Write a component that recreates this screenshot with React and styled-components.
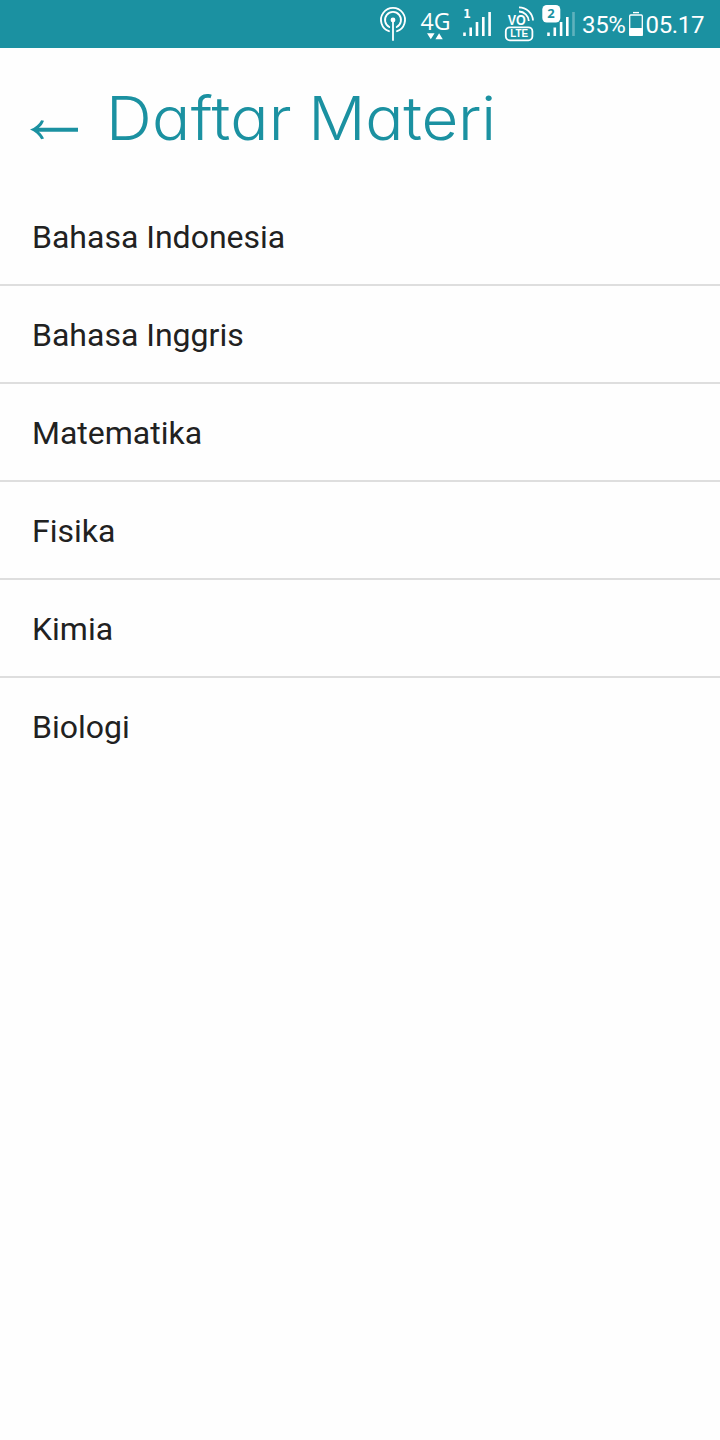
import React from "react";
import styled, { createGlobalStyle } from "styled-components";

const Global = createGlobalStyle`
  *, *::before, *::after { box-sizing: border-box; }
  body { margin: 0; background: #fefefe; }
`;

const Screen = styled.div`
  display: flex;
  flex-direction: column;
  width: 720px;
  min-height: 1440px;
  background: #fefefe;
  font-family: Roboto, sans-serif;
`;

const StatusBar = styled.header`
  display: flex;
  justify-content: flex-end;
  height: 48px;
  padding-right: 15px;
  background: #1b91a1;
  color: #fff;
`;

const StatusIcons = styled.svg`
  width: 204px;
  height: 48px;
  flex: none;
`;

const StatusText = styled.span`
  width: ${(p) => p.$width}px;
  padding-left: ${(p) => p.$inset || 0}px;
  font-size: 24px;
  line-height: 50px;
  letter-spacing: -0.35px;
  white-space: nowrap;
`;

const BatteryIcon = styled.svg`
  width: 18px;
  height: 48px;
  flex: none;
`;

const TitleBar = styled.div`
  display: flex;
  height: 140px;
  padding-left: 30px;
`;

const BackButton = styled.button`
  width: 75.5px;
  height: 140px;
  padding: 0;
  border: 0;
  background: none;
  text-align: left;
`;

const BackArrow = styled.svg`
  display: block;
  width: 50px;
  height: 140px;
`;

const Title = styled.h1`
  margin: 0;
  color: #1b91a1;
  font-family: Inter, sans-serif;
  font-feature-settings: "cv11", "calt" 0;
  font-size: 60px;
  font-weight: 330;
  line-height: 141px;
  word-spacing: -1.5px;
  white-space: nowrap;
  transform: scaleX(1.06);
  transform-origin: left center;
`;

const Word = styled.span`
  letter-spacing: ${(p) => p.$tracking}px;
`;

const List = styled.ul`
  margin: 0;
  padding: 0;
  list-style: none;
`;

const Item = styled.li`
  height: 98px;
  padding-left: 32px;
  border-bottom: 2px solid #dedede;
  color: #212121;
  font-size: 32px;
  line-height: 98px;

  &:last-child { border-bottom-color: transparent; }
`;

const subjects = [
  "Bahasa Indonesia",
  "Bahasa Inggris",
  "Matematika",
  "Fisika",
  "Kimia",
  "Biologi",
];

function NetworkIcons() {
  return (
    <StatusIcons viewBox="378 0 204 48" fill="#fff">
      <g fill="none" stroke="#fff" strokeWidth="1.8" strokeLinecap="round">
        <path d="M389 31.2A12 12 0 1 1 397 31.2" />
        <path d="M389.3 27A8 8 0 1 1 396.7 27" />
        <path d="M393 20V40" />
      </g>
      <circle cx="393" cy="20" r="2.4" />
      <text x="420.5" y="30" fontFamily="Open Sans, sans-serif" fontSize="23.5" textLength="30" lengthAdjust="spacingAndGlyphs">4G</text>
      <path d="M427 33.2h7.6l-3.8 6zM435.4 39.2h7.4l-3.7-6z" />
      <text x="463.3" y="18" fontFamily="DejaVu Sans, sans-serif" fontSize="11.5" fontWeight="700" textLength="7.5" lengthAdjust="spacingAndGlyphs">1</text>
      <path d="M463.2 32.5h2.6V36h-2.6zM469.4 27.5h2.6V36h-2.6zM475.7 22h2.6v14h-2.6zM482 17h2.6v19H482zM488.3 12h2.6v24h-2.6z" />
      <text x="507.8" y="24.5" fontFamily="Liberation Sans, sans-serif" fontSize="14" fontWeight="700" textLength="18" lengthAdjust="spacingAndGlyphs">VO</text>
      <g fill="none" stroke="#fff" strokeWidth="1.8">
        <path d="M519 11.5A10 10 0 0 1 528.8 21" />
        <path d="M519 7.4A14 14 0 0 1 533 20.5" />
        <rect x="505.8" y="27.3" width="26.6" height="13" rx="4" />
      </g>
      <text x="510.2" y="37.4" fontFamily="Liberation Sans, sans-serif" fontSize="10" fontWeight="700" textLength="18" lengthAdjust="spacingAndGlyphs">LTE</text>
      <path d="M547.2 32.5h2.6V36h-2.6zM553.5 27.5h2.6V36h-2.6zM559.8 22h2.6v14h-2.6zM566 17h2.6v19H566z" />
      <path opacity=".3" d="M572.2 12h2.6v24h-2.6z" />
      <rect x="542.3" y="5" width="18" height="17.5" rx="4.5" />
      <text x="547.2" y="18" fill="#1b91a1" fontFamily="Open Sans, sans-serif" fontSize="13" fontWeight="700">2</text>
    </StatusIcons>
  );
}

export default function App() {
  return (
    <Screen>
      <Global />
      <StatusBar>
        <NetworkIcons />
        <StatusText $width={45}>35%</StatusText>
        <BatteryIcon viewBox="627 0 18 48">
          <path d="M633 12.6h6" stroke="#fff" strokeWidth="1.4" />
          <rect x="629.7" y="15" width="12.6" height="20.3" rx="1" fill="none" stroke="#fff" strokeWidth="1.3" />
          <path d="M629.2 28h13.6v7.8h-13.6z" fill="#fff" />
        </BatteryIcon>
        <StatusText $width={60} $inset={0.6}>05.17</StatusText>
      </StatusBar>
      <TitleBar>
        <BackButton aria-label="Kembali">
          <BackArrow viewBox="30 48 50 140">
            <path fill="#1b91a1" d="M30 129.6C35 127.5 39 124.5 41.2 120.2L44 120.8C42.8 124 41 126.3 38.8 127.8H78V131.7H38.8C41 133.3 42.8 135.5 44 138.6L41.2 139.2C39 135 35 131.8 30 129.6Z" />
          </BackArrow>
        </BackButton>
        <Title>
          <Word $tracking={0.3}>Daftar</Word> <Word $tracking={-0.25}>Materi</Word>
        </Title>
      </TitleBar>
      <List>
        {subjects.map((name) => (
          <Item key={name}>{name}</Item>
        ))}
      </List>
    </Screen>
  );
}
